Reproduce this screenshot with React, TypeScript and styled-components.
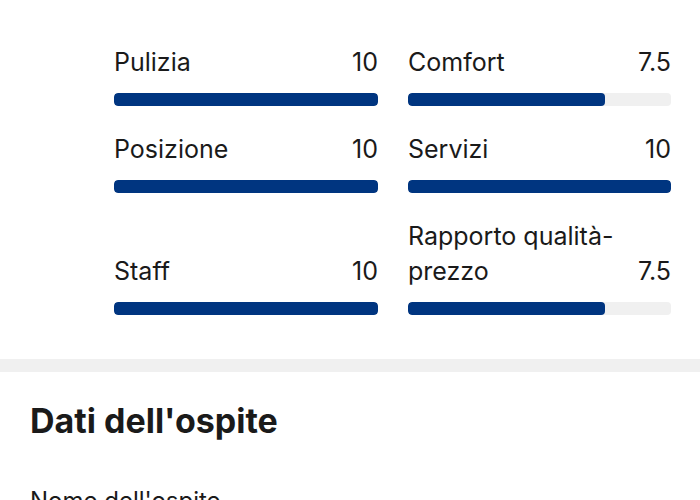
import * as React from 'react'
import styled, { createGlobalStyle } from 'styled-components'

/**
 * Global page styles.
 */
const GlobalStyle = createGlobalStyle`
  html, body {
    margin: 0;
    padding: 0;
    background: #ffffff;
  }

  body {
    font-family: Inter, 'Noto Sans', 'Liberation Sans', sans-serif;
    color: #1a1a1a;
    -webkit-font-smoothing: antialiased;
  }
`

/**
 * Page component.
 */
const Page = styled.div`
  width: 700px;
  height: 500px;
  overflow: hidden;
  background: #ffffff;
`

/**
 * Scores grid component.
 */
const Scores = styled.section`
  display: grid;
  grid-template-columns: 264px 263px;
  column-gap: 30px;
  row-gap: 26px;
  align-items: end;
  padding: 45px 29px 44px 114px;
`

/**
 * Score cell component.
 */
const Score = styled.div`
  display: flex;
  flex-direction: column;
`

/**
 * Score header component.
 */
const Header = styled.div`
  display: flex;
  align-items: flex-end;
  justify-content: space-between;
  gap: 16px;
  margin-bottom: 13px;
  font-size: 25px;
  line-height: 35px;
  color: #1a1a1a;
`

/**
 * Label component.
 */
const Label = styled.span`
  flex: 1 1 auto;
  min-width: 0;
`

/**
 * Value component.
 */
const Value = styled.span`
  flex: 0 0 auto;
`

/**
 * Bar track component.
 */
const Track = styled.div`
  height: 13px;
  border-radius: 4px;
  background: #f0f0f0;
  overflow: hidden;
`

/**
 * Bar fill component.
 */
const Fill = styled.div`
  height: 100%;
  border-radius: 4px;
  background: #003580;
`

/**
 * Section divider component.
 */
const Divider = styled.div`
  height: 13px;
  background: #f0f0f0;
`

/**
 * Guest section component.
 */
const Guest = styled.section`
  padding: 29px 30px 0 30px;
`

/**
 * Title component.
 */
const Title = styled.h2`
  margin: 0 0 45px 0;
  font-size: 34px;
  line-height: 40px;
  font-weight: 700;
  color: #1a1a1a;
`

/**
 * Field label component.
 */
const FieldLabel = styled.div`
  font-size: 24px;
  line-height: 30px;
  color: #1a1a1a;
`

type Rating = {
  label: string
  value: number
}

const ratings: Rating[] = [
  { label: 'Pulizia', value: 10 },
  { label: 'Comfort', value: 7.5 },
  { label: 'Posizione', value: 10 },
  { label: 'Servizi', value: 10 },
  { label: 'Staff', value: 10 },
  { label: 'Rapporto qualità-prezzo', value: 7.5 },
]

/**
 * App Component.
 */
export default function App() {
  return (
    <Page>
      <GlobalStyle />
      <Scores>
        {ratings.map((rating) => (
          <Score key={rating.label}>
            <Header>
              <Label>{rating.label}</Label>
              <Value>{rating.value}</Value>
            </Header>
            <Track>
              <Fill style={{ width: `${rating.value * 10}%` }} />
            </Track>
          </Score>
        ))}
      </Scores>
      <Divider />
      <Guest>
        <Title>Dati dell'ospite</Title>
        <FieldLabel>Nome dell'ospite</FieldLabel>
      </Guest>
    </Page>
  )
}
